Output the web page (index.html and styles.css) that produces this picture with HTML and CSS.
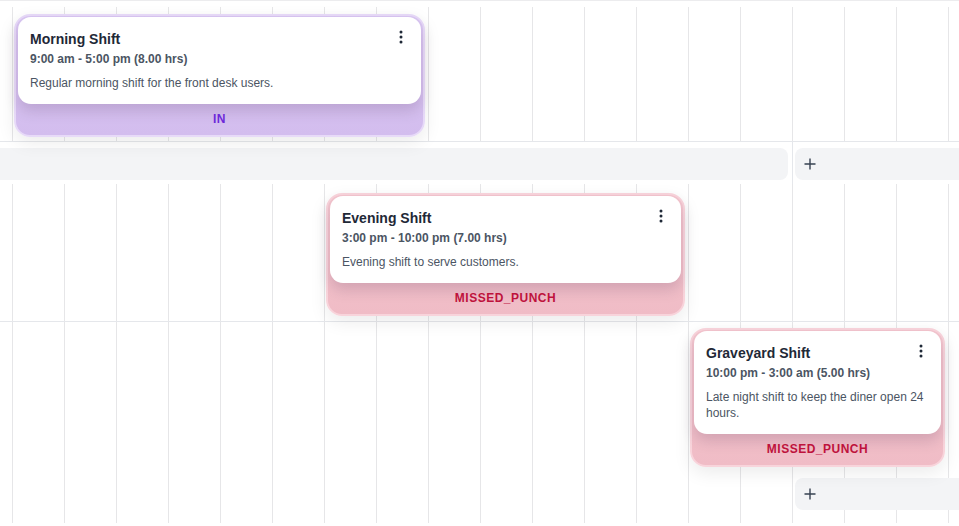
FILE: index.html
```html
<!DOCTYPE html>
<html lang="en">
<head>
<meta charset="utf-8">
<title>Shift schedule</title>
<link rel="stylesheet" href="styles.css">
</head>
<body>
<div class="schedule">
  <div class="topline"></div>

  <div class="lane lane-a">
    <div class="shift shift-in" style="grid-column: 2 / span 8">
      <div class="shift-body">
        <div class="shift-head">
          <div class="shift-title">Morning Shift</div>
          <svg class="kebab" width="16" height="16" viewBox="0 0 16 16"><circle cx="8" cy="3" r="1.5"/><circle cx="8" cy="8" r="1.5"/><circle cx="8" cy="13" r="1.5"/></svg>
        </div>
        <div class="shift-time">9:00 am - 5:00 pm (8.00 hrs)</div>
        <div class="shift-desc">Regular morning shift for the front desk users.</div>
      </div>
      <div class="status status-in">IN</div>
    </div>
  </div>

  <div class="addrow">
    <div class="addbar addbar-day1"></div>
    <div class="addbar addbar-day2">
      <svg class="plus" width="12" height="12" viewBox="0 0 12 12"><path d="M6 0.5v11M0.5 6h11"/></svg>
    </div>
  </div>

  <div class="lane lane-b">
    <div class="shift shift-missed" style="grid-column: 8 / span 7">
      <div class="shift-body">
        <div class="shift-head">
          <div class="shift-title">Evening Shift</div>
          <svg class="kebab" width="16" height="16" viewBox="0 0 16 16"><circle cx="8" cy="3" r="1.5"/><circle cx="8" cy="8" r="1.5"/><circle cx="8" cy="13" r="1.5"/></svg>
        </div>
        <div class="shift-time">3:00 pm - 10:00 pm (7.00 hrs)</div>
        <div class="shift-desc">Evening shift to serve customers.</div>
      </div>
      <div class="status status-missed">MISSED_PUNCH</div>
    </div>
  </div>

  <div class="lane lane-c">
    <div class="shift shift-missed" style="grid-column: 15 / span 5">
      <div class="shift-body">
        <div class="shift-head">
          <div class="shift-title">Graveyard Shift</div>
          <svg class="kebab" width="16" height="16" viewBox="0 0 16 16"><circle cx="8" cy="3" r="1.5"/><circle cx="8" cy="8" r="1.5"/><circle cx="8" cy="13" r="1.5"/></svg>
        </div>
        <div class="shift-time">10:00 pm - 3:00 am (5.00 hrs)</div>
        <div class="shift-desc">Late night shift to keep the diner open 24 hours.</div>
      </div>
      <div class="status status-missed">MISSED_PUNCH</div>
    </div>
    <div class="addbar addbar-lane">
      <svg class="plus" width="12" height="12" viewBox="0 0 12 12"><path d="M6 0.5v11M0.5 6h11"/></svg>
    </div>
  </div>
</div>
</body>
</html>
```
FILE: styles.css
```css
* { box-sizing: border-box; }

html, body {
  margin: 0;
  padding: 0;
  background: #ffffff;
  width: 959px;
  height: 526px;
  overflow: hidden;
}

body {
  font-family: "Liberation Sans", Arial, Helvetica, sans-serif;
  color: #1f2937;
}

.schedule {
  width: 959px;
}

.topline {
  height: 1px;
  background: #ececee;
  margin-bottom: 6px;
}

.lane {
  display: grid;
  grid-template-columns: 12px repeat(18, 52px) 1fr;
  align-items: start;
  background-image: linear-gradient(to right, #e6e6e8 1px, transparent 1px);
  background-size: 52px 100%;
  background-position: 12px 0;
}

.lane-a {
  padding: 7px 0 4px;
  border-bottom: 1px solid #e5e7eb;
}

.lane-b {
  padding: 9px 0 5px;
  border-bottom: 1px solid #e5e7eb;
}

.lane-c {
  padding: 6px 0 13px;
  row-gap: 11px;
}

/* shift card */
.shift {
  margin: 0 3px 0 2px;
  border: 2px solid transparent;
  border-radius: 16px;
  padding: 1px 2px 0;
  display: flex;
  flex-direction: column;
  box-shadow: 0 6px 18px rgba(0, 0, 0, 0.08);
  position: relative;
  z-index: 1;
}

.shift-in {
  background: linear-gradient(#dac7f3, #d3bdee);
  border-color: #e7daf8;
}

.shift-missed {
  background: linear-gradient(#f4c6cf, #f0bcc6);
  border-color: #f8d4db;
}

.shift-body {
  background: #ffffff;
  border-radius: 13px;
  padding: 12px 12px 13px;
  box-shadow: 0 7px 14px rgba(70, 40, 80, 0.18);
}

.shift-head {
  display: flex;
  justify-content: space-between;
  align-items: flex-start;
}

.shift-title {
  font-size: 14px;
  line-height: 20px;
  font-weight: 700;
  color: #1f2937;
  margin-bottom: 2px;
}

.kebab {
  fill: #1f2937;
  flex: none;
}

.shift-time {
  font-size: 12px;
  line-height: 16px;
  font-weight: 700;
  color: #4b5563;
}

.shift-desc {
  margin-top: 8px;
  font-size: 12px;
  line-height: 16px;
  color: #4b5563;
}

.status {
  text-align: center;
  font-size: 12px;
  line-height: 16px;
  font-weight: 700;
  letter-spacing: 0.5px;
  padding: 7px 0 8px;
}

.status-in { color: #6d28d9; }
.status-missed { color: #be123c; }

/* add rows */
.addrow {
  display: flex;
  padding: 6px 0 4px;
  background-image: linear-gradient(#e5e7eb, #e5e7eb);
  background-size: 1px 100%;
  background-position: 792px 0;
  background-repeat: no-repeat;
}

.addbar {
  height: 32px;
  background: #f3f4f6;
  border-radius: 8px;
  display: flex;
  align-items: center;
  padding-left: 9px;
}

.addbar-day1 {
  width: 788px;
  border-radius: 0 8px 8px 0;
}

.addbar-day2 {
  flex: 1;
  margin-left: 7px;
  margin-right: -12px;
}

.addbar-lane {
  grid-column: 17 / -1;
  margin-left: 3px;
  margin-right: -12px;
}

.plus {
  stroke: #374151;
  stroke-width: 1.4;
  fill: none;
}
```
